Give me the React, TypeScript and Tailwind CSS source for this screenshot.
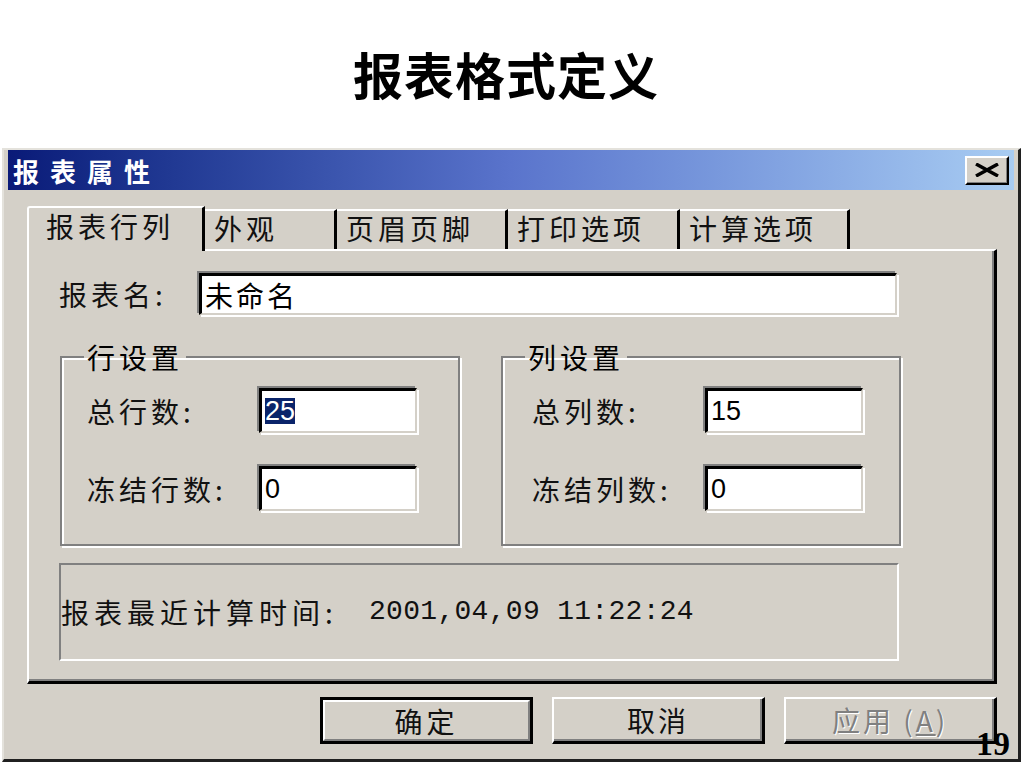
import React from 'react';

const cjk = "font-['Noto_Sans_CJK_SC',sans-serif]";

function Sunken({ className = '', children }: { className?: string; children?: React.ReactNode }) {
  return (
    <div
      className={`flex items-center bg-white border-t-[3px] border-l-[3px] border-t-black border-l-black border-r-2 border-b-2 border-r-[#d4d0c8] border-b-[#d4d0c8] shadow-[-2px_-2px_0_#808080,2px_2px_0_#ffffff] ${className}`}
    >
      {children}
    </div>
  );
}

function Group({ title, rows, pad, labelW }: { title: string; rows: { label: string; value: React.ReactNode }[]; pad: string; labelW: string }) {
  return (
    <fieldset className="w-[400px] h-[206px] border-2 border-[#808080] shadow-[2px_2px_0_#ffffff,inset_2px_2px_0_#ffffff]">
      <legend className={`ml-[22px] px-[3px] text-[28px] leading-[34px] tracking-[4px] ${cjk}`}>{title}</legend>
      <div className={`flex flex-col gap-[33px] pt-[14px] ${pad}`}>
        {rows.map(r => (
          <div key={r.label} className="flex items-center">
            <span className={`${labelW} text-[28px] tracking-[4px] text-[#111] ${cjk}`}>{r.label}</span>
            <Sunken className="w-[158px] h-[45px] pl-[3px]">
              {r.value}
            </Sunken>
          </div>
        ))}
      </div>
    </fieldset>
  );
}

function Button({ label, variant }: { label: React.ReactNode; variant: 'default' | 'normal' | 'disabled' }) {
  const base = 'w-[213px] h-[47px] flex items-center justify-center bg-[#d4d0c8]';
  if (variant === 'default') {
    return (
      <div className={`${base} border-[3px] border-black`}>
        <div className="w-full h-full flex items-center justify-center border-t-2 border-l-2 border-white border-r-2 border-b-2 border-r-[#808080] border-b-[#808080]">
          <span className={`text-[28px] tracking-[4px] text-[#111] ${cjk}`}>{label}</span>
        </div>
      </div>
    );
  }
  return (
    <div className={`${base} border-t-2 border-l-2 border-white border-r-[3px] border-b-[3px] border-r-black border-b-black shadow-[inset_-2px_-2px_0_#808080]`}>
      <span
        className={`text-[28px] tracking-[3px] ${cjk} ${variant === 'disabled' ? 'text-[#808080] [text-shadow:1px_1px_0_#ffffff]' : 'text-[#111]'}`}
      >
        {label}
      </span>
    </div>
  );
}

export default function App() {
  const tabs = [
    { label: '外观', w: 'w-[132px]' },
    { label: '页眉页脚', w: 'w-[171px]' },
    { label: '打印选项', w: 'w-[172px]' },
    { label: '计算选项', w: 'w-[170px]' },
  ];

  return (
    <div className="relative w-[1024px] h-[768px] bg-white overflow-hidden">
      <div className="h-[148px] flex items-center justify-center pb-[2px] pr-[12px]">
        <h1 className={`text-[50px] font-bold tracking-[1px] text-black leading-none ${cjk}`}>报表格式定义</h1>
      </div>

      <div className="ml-[2px] w-[1019px] h-[614px] flex flex-col bg-[#d4d0c8] border-l-2 border-t-2 border-[#e4e2dc] border-r-[3px] border-b-[3px] border-r-[#202020] border-b-[#202020] px-[4px]">
        {/* title bar */}
        <div className="h-[40px] flex items-center justify-between bg-gradient-to-r from-[#0a1a78] via-[#5a74cc] to-[#a8ccf2] pl-[5px] pr-[5px]">
          <span className={`text-[26px] font-bold tracking-[11px] text-white ${cjk}`}>报表属性</span>
          <div className="w-[44px] h-[29px] flex items-center justify-center bg-[#d4d0c8] border-t-2 border-l-2 border-white border-r-2 border-b-2 border-r-black border-b-black shadow-[inset_-1px_-1px_0_#808080]">
            <svg width="28" height="14" viewBox="0 0 28 14">
              <path d="M3 1 L25 13 M25 1 L3 13" stroke="#000" strokeWidth="3.5" />
            </svg>
          </div>
        </div>

        {/* body */}
        <div className="flex flex-col pl-[19px] pt-[15px]">
          {/* tabs */}
          <div className="flex items-end h-[44px]">
            <div className="w-[178px] h-[45px] -mb-[2px] z-10 relative flex items-start pl-[17px] bg-[#d4d0c8] border-l-2 border-t-2 border-white border-r-[3px] border-r-black rounded-tl-[3px]">
              <span className={`text-[28px] leading-[36px] tracking-[4px] text-[#111] ${cjk}`}>报表行列</span>
            </div>
            {tabs.map(t => (
              <div
                key={t.label}
                className={`${t.w} h-[40px] flex items-start pl-[9px] border-t-2 border-white border-r-[3px] border-r-black`}
              >
                <span className={`text-[28px] leading-[34px] tracking-[4px] text-[#111] ${cjk}`}>{t.label}</span>
              </div>
            ))}
          </div>

          {/* panel */}
          <div className="w-[970px] h-[435px] flex flex-col border-l-2 border-t-2 border-white border-r-[3px] border-b-[3px] border-r-black border-b-black shadow-[inset_-2px_-2px_0_#808080] pl-[30px] pt-[22px]">
            <div className="flex items-center h-[42px]">
              <span className={`w-[140px] text-[28px] tracking-[4px] text-[#111] ${cjk}`}>报表名:</span>
              <Sunken className="w-[698px] h-[42px] pl-[3px]">
                <span className={`text-[28px] tracking-[3px] text-black ${cjk}`}>未命名</span>
              </Sunken>
            </div>

            <div className="flex gap-[41px] mt-[25px] ml-[1px]">
              <Group
                title="行设置"
                pad="pl-[25px]"
                labelW="w-[172px]"
                rows={[
                  {
                    label: '总行数:',
                    value: <span className="bg-[#0a246a] text-white text-[27px] leading-[26px] font-['Liberation_Sans',sans-serif]">25</span>,
                  },
                  { label: '冻结行数:', value: <span className="text-[27px] font-['Liberation_Sans',sans-serif]">0</span> },
                ]}
              />
              <Group
                title="列设置"
                pad="pl-[29px]"
                labelW="w-[173px]"
                rows={[
                  { label: '总列数:', value: <span className="text-[27px] font-['Liberation_Sans',sans-serif]">15</span> },
                  { label: '冻结列数:', value: <span className="text-[27px] font-['Liberation_Sans',sans-serif]">0</span> },
                ]}
              />
            </div>

            <div className="mt-[17px] w-[840px] h-[98px] flex items-center border-t-2 border-l-2 border-[#808080] border-r-2 border-b-2 border-r-white border-b-white">
              <span className={`w-[308px] text-[28px] tracking-[5px] text-[#111] ${cjk}`}>报表最近计算时间:</span>
              <span className="text-[28px] tracking-[0.3px] text-[#111] font-['Liberation_Mono',monospace]">2001,04,09 11:22:24</span>
            </div>
          </div>

          {/* buttons */}
          <div className="flex justify-end gap-[19px] mt-[13px] w-[970px]">
            <Button label="确定" variant="default" />
            <Button label="取消" variant="normal" />
            <Button
              label={
                <>
                  应用 (<span className="underline">A</span>)
                </>
              }
              variant="disabled"
            />
          </div>
        </div>
      </div>

      <span className="absolute left-[976px] top-[727px] text-[34px] font-bold leading-none text-black font-['Liberation_Serif',serif]">19</span>
    </div>
  );
}
